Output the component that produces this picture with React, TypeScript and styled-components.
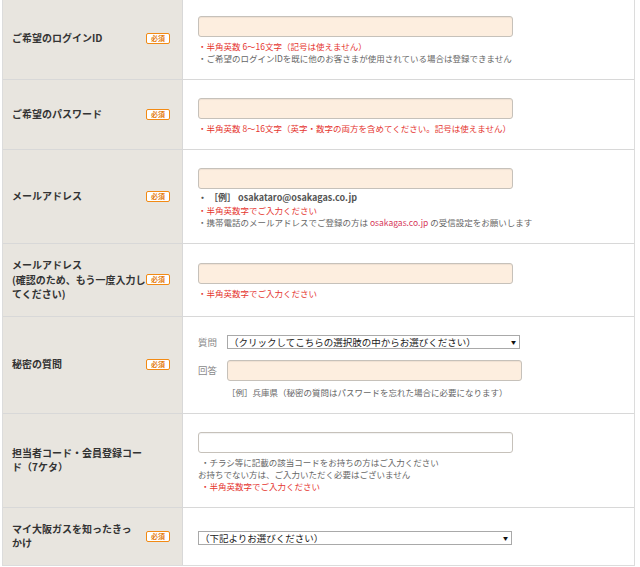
import styled, { createGlobalStyle } from "styled-components";

const GlobalStyle = createGlobalStyle`
  html, body {
    margin: 0;
    padding: 0;
    background: #ffffff;
  }
  body {
    font-family: "Noto Sans CJK JP", "Noto Sans", sans-serif;
    color: #333333;
  }
`;

const Page = styled.div`
  width: 633px;
  margin: -3px 0 0 2px;
`;

const Table = styled.div`
  border-left: 1px solid #dcdcdc;
  border-right: 1px solid #dcdcdc;
  border-bottom: 1px solid #dcdcdc;
`;

const Row = styled.div`
  display: grid;
  grid-template-columns: 180px 1fr;
  border-top: 1px solid #d8d8d8;
`;

const LabelCell = styled.div`
  display: flex;
  align-items: center;
  justify-content: space-between;
  background: #e8e5df;
  border-right: 1px solid #d8d8d8;
  padding: 14px 12px 14px 9px;
`;

const LabelText = styled.div`
  flex: 0 0 auto;
  font-size: 10px;
  line-height: 14.5px;
  font-weight: bold;
  white-space: nowrap;
  color: #333333;
`;

const Badge = styled.span`
  flex: 0 0 auto;
  display: flex;
  align-items: center;
  justify-content: center;
  box-sizing: border-box;
  width: 24px;
  height: 11px;
  border: 1.5px solid #f28a14;
  border-radius: 2px;
  background: #ffffff;
  color: #e47d10;
  font-size: 7px;
  font-weight: bold;
  line-height: 1;
`;

const FieldCell = styled.div`
  display: flex;
  flex-direction: column;
  justify-content: center;
  padding: 18px 0 15px 15px;
`;

const TextInput = styled.input<{ $w: number; $white?: boolean }>`
  box-sizing: border-box;
  display: block;
  width: ${(p) => p.$w}px;
  height: 21px;
  margin: 0;
  border: 1px solid #c6c1ba;
  border-radius: 3px;
  background: ${(p) => (p.$white ? "#ffffff" : "#fdeedf")};
  box-shadow: inset 0 1px 1px rgba(0, 0, 0, 0.06);
  outline: none;
`;

const Notes = styled.div`
  margin-top: 3px;
`;

const Note = styled.div<{ $tone?: "red" | "gray" | "strong"; $indent?: number }>`
  padding-left: ${(p) => p.$indent ?? 0}px;
  font-size: ${(p) => (p.$tone === "strong" ? 9 : 8.5)}px;
  line-height: 12px;
  white-space: nowrap;
  color: ${(p) =>
    p.$tone === "red" ? "#e5352f" : p.$tone === "strong" ? "#555555" : "#666666"};
  font-weight: ${(p) => (p.$tone === "strong" ? "bold" : "normal")};
`;

const Link = styled.span`
  color: #d6385a;
`;

const QaLine = styled.div<{ $gap?: number }>`
  display: flex;
  align-items: center;
  margin-top: ${(p) => p.$gap ?? 0}px;
`;

const QaLabel = styled.span`
  width: 29px;
  font-size: 9.5px;
  line-height: 12px;
  color: #8a8a8a;
`;

const SelectWrap = styled.div<{ $w: number }>`
  position: relative;
  width: ${(p) => p.$w}px;
  height: 14px;
`;

const Select = styled.select`
  box-sizing: border-box;
  display: block;
  appearance: none;
  width: 100%;
  height: 14px;
  margin: 0;
  padding: 0 12px 0 1px;
  border: 1px solid #a9a9a9;
  border-radius: 0;
  background: #ffffff;
  font-family: "Noto Sans CJK JP", "Noto Sans", sans-serif;
  font-size: 9.5px;
  line-height: 12px;
  color: #222222;
  outline: none;
`;

const Arrow = styled.span`
  position: absolute;
  right: 4px;
  top: 50%;
  transform: translateY(-50%);
  font-size: 5px;
  line-height: 6px;
  color: #111111;
  pointer-events: none;
`;

const Example = styled.div`
  margin: 5px 0 0 29px;
  font-size: 8.5px;
  line-height: 12px;
  color: #666666;
`;

function Required() {
  return <Badge>必須</Badge>;
}

export default function App() {
  return (
    <>
      <GlobalStyle />
      <Page>
        <Table>
          <Row>
            <LabelCell>
              <LabelText>ご希望のログインID</LabelText>
              <Required />
            </LabelCell>
            <FieldCell>
              <TextInput $w={315} />
              <Notes>
                <Note $tone="red">・半角英数 6～16文字（記号は使えません）</Note>
                <Note>・ご希望のログインIDを既に他のお客さまが使用されている場合は登録できません</Note>
              </Notes>
            </FieldCell>
          </Row>

          <Row>
            <LabelCell>
              <LabelText>ご希望のパスワード</LabelText>
              <Required />
            </LabelCell>
            <FieldCell>
              <TextInput $w={315} type="password" />
              <Notes>
                <Note $tone="red">
                  ・半角英数 8～16文字（英字・数字の両方を含めてください。記号は使えません）
                </Note>
              </Notes>
            </FieldCell>
          </Row>

          <Row>
            <LabelCell>
              <LabelText>メールアドレス</LabelText>
              <Required />
            </LabelCell>
            <FieldCell>
              <TextInput $w={315} />
              <Notes>
                <Note $tone="strong">・ ［例］ osakataro@osakagas.co.jp</Note>
                <Note $tone="red">・半角英数字でご入力ください</Note>
                <Note>
                  ・携帯電話のメールアドレスでご登録の方は <Link>osakagas.co.jp</Link> の受信設定をお願いします
                </Note>
              </Notes>
            </FieldCell>
          </Row>

          <Row>
            <LabelCell>
              <LabelText>
                メールアドレス
                <br />
                (確認のため、もう一度入力し
                <br />
                てください)
              </LabelText>
              <Required />
            </LabelCell>
            <FieldCell>
              <TextInput $w={315} />
              <Notes>
                <Note $tone="red">・半角英数字でご入力ください</Note>
              </Notes>
            </FieldCell>
          </Row>

          <Row>
            <LabelCell>
              <LabelText>秘密の質問</LabelText>
              <Required />
            </LabelCell>
            <FieldCell>
              <QaLine>
                <QaLabel>質問</QaLabel>
                <SelectWrap $w={293}>
                  <Select defaultValue="">
                    <option value="">（クリックしてこちらの選択肢の中からお選びください）</option>
                  </Select>
                  <Arrow>▼</Arrow>
                </SelectWrap>
              </QaLine>
              <QaLine $gap={11}>
                <QaLabel>回答</QaLabel>
                <TextInput $w={295} />
              </QaLine>
              <Example>［例］兵庫県（秘密の質問はパスワードを忘れた場合に必要になります）</Example>
            </FieldCell>
          </Row>

          <Row>
            <LabelCell>
              <LabelText>
                担当者コード・会員登録コー
                <br />
                ド（7ケタ）
              </LabelText>
            </LabelCell>
            <FieldCell>
              <TextInput $w={315} $white />
              <Notes>
                <Note $indent={3}>・チラシ等に記載の該当コードをお持ちの方はご入力ください</Note>
                <Note>お持ちでない方は、ご入力いただく必要はございません</Note>
                <Note $tone="red" $indent={3}>・半角英数字でご入力ください</Note>
              </Notes>
            </FieldCell>
          </Row>

          <Row>
            <LabelCell>
              <LabelText>
                マイ大阪ガスを知ったきっ
                <br />
                かけ
              </LabelText>
              <Required />
            </LabelCell>
            <FieldCell>
              <SelectWrap $w={314}>
                <Select defaultValue="">
                  <option value="">（下記よりお選びください）</option>
                </Select>
                <Arrow>▼</Arrow>
              </SelectWrap>
            </FieldCell>
          </Row>
        </Table>
      </Page>
    </>
  );
}
